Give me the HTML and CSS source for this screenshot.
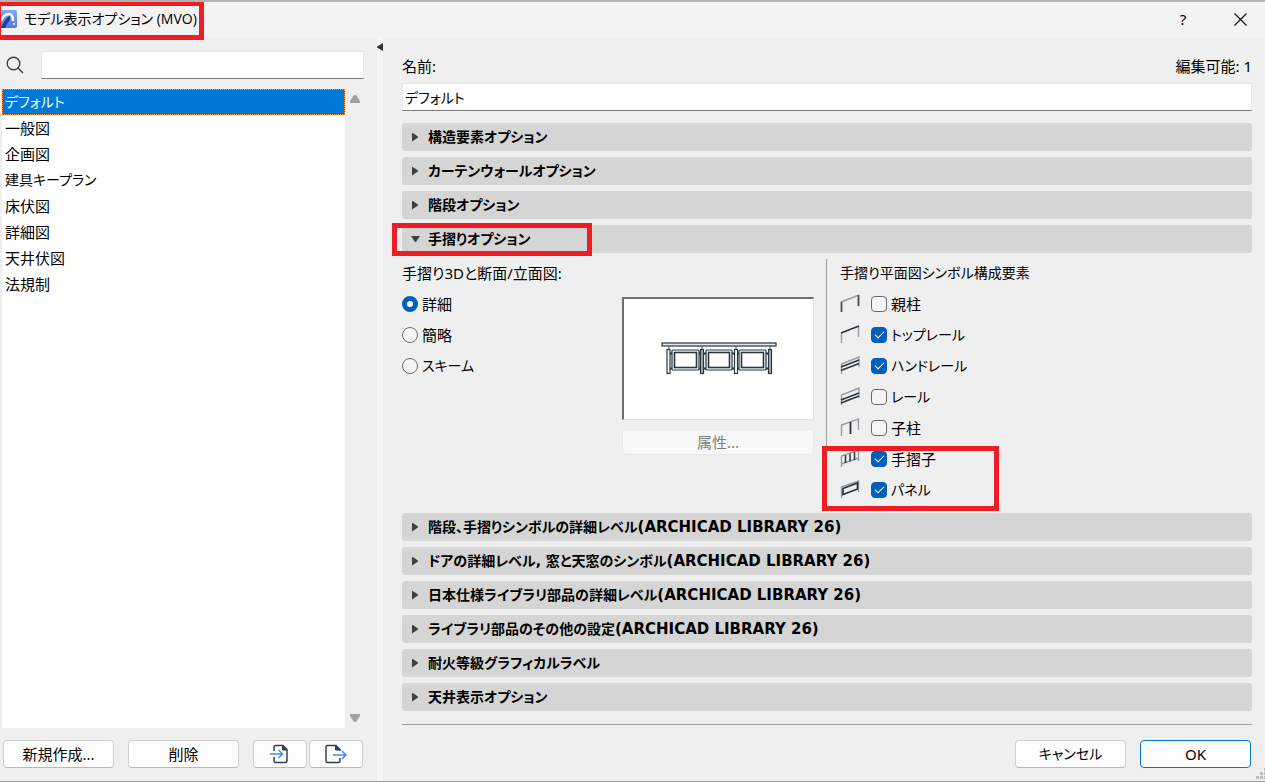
FILE: index.html
```html
<!DOCTYPE html>
<html lang="ja">
<head>
    <meta charset="UTF-8">
    <meta name="viewport" content="width=device-width, initial-scale=1.0">
    <title>モデル表示オプション (MVO)</title>
    <link rel="stylesheet" href="styles.css">
</head>
<body>
    <header class="titlebar">
        <svg class="logo" width="18" height="20" viewBox="0 0 18 20">
            <defs>
                <linearGradient id="logobg" x1="0" y1="0" x2="0" y2="1">
                    <stop offset="0" stop-color="#86a9ee"/>
                    <stop offset="1" stop-color="#4a78dc"/>
                </linearGradient>
            </defs>
            <path d="M0 1h15q2 0 2 2v14q0 2-2 2H0z" fill="url(#logobg)"/>
            <path d="M1 19C4 13 6 8 10 7v4C8 13 6 16 5 19z" fill="#1f4192"/>
            <path d="M0 13C3 8 5 5 9 5c3 0 4 3 4 7" fill="none" stroke="#fff" stroke-width="2.4"/>
            <circle cx="14" cy="15" r="1.1" fill="#fff"/>
        </svg>
        <h1>モデル表示オプション (MVO)</h1>
        <button type="button" class="winbtn" aria-label="ヘルプ">?</button>
        <button type="button" class="winbtn" aria-label="閉じる">
            <svg width="13" height="13" viewBox="0 0 13 13"><path d="M.5.5l12 12M12.5.5l-12 12" stroke="#1a1a1a" stroke-width="1.3"/></svg>
        </button>
        <span class="mark mark-title"></span>
    </header>

    <div class="dialog">
        <aside class="side">
            <div class="search">
                <label for="search">
                    <svg width="18" height="18" viewBox="0 0 18 18" fill="none" stroke="#33414b" stroke-width="1.4"><circle cx="7.5" cy="7.5" r="6.3"/><path d="M12 12l5 5"/></svg>
                </label>
                <input type="text" id="search" aria-label="検索">
            </div>
            <div class="listwrap">
                <ul class="list">
                    <li><button type="button" class="kana selected">デフォルト</button></li>
                    <li><button type="button">一般図</button></li>
                    <li><button type="button">企画図</button></li>
                    <li><button type="button" class="kana">建具キープラン</button></li>
                    <li><button type="button">床伏図</button></li>
                    <li><button type="button">詳細図</button></li>
                    <li><button type="button">天井伏図</button></li>
                    <li><button type="button">法規制</button></li>
                </ul>
                <div class="scroll">
                    <svg width="10" height="8" viewBox="0 0 10 8"><path d="M4 0h2l4 6v2H0V6z" fill="#a0a0a0"/></svg>
                    <svg width="10" height="8" viewBox="0 0 10 8"><path d="M0 0h10v2L6 8H4L0 2z" fill="#a0a0a0"/></svg>
                </div>
            </div>
            <div class="sidebtns">
                <button type="button" class="btn">新規作成...</button>
                <button type="button" class="btn">削除</button>
                <div class="pair">
                    <button type="button" class="btn small" aria-label="読み込み">
                        <svg width="20" height="20" viewBox="0 0 20 20" fill="none" stroke-width="1.5">
                            <path d="M4 7V3q0-1.5 1.5-1.5H13l4 4V17q0 1.5-1.5 1.5h-10Q4 18.5 4 17v-4" stroke="#33414b"/>
                            <path d="M12.5 1.5V6H17z" fill="#33414b" stroke="#33414b" stroke-width="1"/>
                            <path d="M0 10h12M8.5 6l4 4-4 4" stroke="#3d8bfa"/>
                        </svg>
                    </button>
                    <button type="button" class="btn small" aria-label="書き出し">
                        <svg width="22" height="20" viewBox="0 0 22 20" fill="none" stroke-width="1.5">
                            <path d="M15 7V5.5l-4-4H2.5Q1 1.5 1 3v14q0 1.5 1.5 1.5h11Q15 18.5 15 17v-3" stroke="#33414b"/>
                            <path d="M10.5 1.5V6H15z" fill="#33414b" stroke="#33414b" stroke-width="1"/>
                            <path d="M8 11h13M17 7l4 4-4 4" stroke="#3d8bfa"/>
                        </svg>
                    </button>
                </div>
            </div>
        </aside>

        <div class="splitter">
            <svg width="6" height="8" viewBox="0 0 6 8"><path d="M6 0v8L0 4.5v-1z" fill="#333"/></svg>
        </div>

        <main class="main">
            <div class="namerow">
                <label for="name">名前:</label>
                <span>編集可能: 1</span>
            </div>
            <input type="text" id="name" class="name kana" value="デフォルト">

            <div class="sections">
                <button type="button" class="section">構造要素オプション</button>
                <button type="button" class="section">カーテンウォールオプション</button>
                <button type="button" class="section">階段オプション</button>
                <div class="opened">
                    <button type="button" class="section open" aria-expanded="true">手摺りオプション</button>
                    <span class="mark mark-section"></span>
                </div>
                <div class="railing">
                    <div class="detail">
                        <p>手摺り3Dと断面/立面図:</p>
                        <div class="cols">
                            <div class="options">
                                <label><input type="radio" name="level" checked>詳細</label>
                                <label><input type="radio" name="level">簡略</label>
                                <label class="kana"><input type="radio" name="level">スキーム</label>
                            </div>
                            <div class="preview">
                                <div class="picture">
                                    <svg width="116" height="34" viewBox="0 0 116 34" fill="none" stroke="#27363f">
                                        <path d="M8 4v4M41 4v4M75 4v4M109 4v4" stroke="#59656c"/>
                                        <path d="M8.5 11.5h101M8.5 26.5h101" stroke="#27363f" stroke-width="2"/>
                                        <g fill="#fff">
                                            <rect x="11" y="8" width="27" height="20" rx="1" stroke-width="1.2"/>
                                            <rect x="45" y="8" width="26" height="20" rx="1" stroke-width="1.2"/>
                                            <rect x="78" y="8" width="27" height="20" rx="1" stroke-width="1.2"/>
                                            <rect x="13.5" y="10.5" width="22" height="15" stroke-width="1.6"/>
                                            <rect x="47.5" y="10.5" width="21" height="15" stroke-width="1.6"/>
                                            <rect x="80.5" y="10.5" width="22" height="15" stroke-width="1.6"/>
                                        </g>
                                        <g fill="#aab0b3" stroke-width="1.2">
                                            <rect x="6" y="7.5" width="3" height="24" fill="#fff"/>
                                            <rect x="39.5" y="7.5" width="3" height="24"/>
                                            <rect x="73.5" y="7.5" width="3" height="24" fill="#fff"/>
                                            <rect x="107.5" y="7.5" width="3" height="24"/>
                                        </g>
                                        <rect x="1" y="1" width="114" height="3" fill="#e4e7e8" stroke-width="1.2"/>
                                    </svg>
                                </div>
                                <button type="button" class="btn" disabled>属性...</button>
                            </div>
                        </div>
                    </div>
                    <div class="parts">
                        <p class="kana">手摺り平面図シンボル構成要素</p>
                        <div class="options">
                            <div class="part">
                                <svg width="20" height="22" viewBox="0 0 20 22" fill="none"><path d="M1 9L19 2" stroke="#969c9f" stroke-width="1.4"/><path d="M1.5 9v10M18.5 2v11" stroke="#46525a" stroke-width="1.8"/></svg>
                                <label><input type="checkbox">親柱</label>
                            </div>
                            <div class="part">
                                <svg width="20" height="22" viewBox="0 0 20 22" fill="none"><path d="M1.5 9v10M18.5 2v11" stroke="#969c9f" stroke-width="1.4"/><path d="M1 9L19 2" stroke="#27363f" stroke-width="1.8"/></svg>
                                <label class="kana"><input type="checkbox" checked>トップレール</label>
                            </div>
                            <div class="part">
                                <svg width="20" height="22" viewBox="0 0 20 22" fill="none"><path d="M1.5 19V9L19 2v10" stroke="#969c9f" stroke-width="1.4"/><path d="M1 12l18-7M1 15.5l18-7" stroke="#27363f" stroke-width="1.6"/></svg>
                                <label class="kana"><input type="checkbox" checked>ハンドレール</label>
                            </div>
                            <div class="part">
                                <svg width="20" height="22" viewBox="0 0 20 22" fill="none"><path d="M1.5 19V9L19 2v10" stroke="#969c9f" stroke-width="1.4"/><path d="M1 14l18-7M1 17l18-7" stroke="#27363f" stroke-width="1.5"/></svg>
                                <label class="kana"><input type="checkbox">レール</label>
                            </div>
                            <div class="part">
                                <svg width="20" height="22" viewBox="0 0 20 22" fill="none"><path d="M1.5 19V8L18.5 2v11" stroke="#969c9f" stroke-width="1.4"/><path d="M10.5 5v12" stroke="#27363f" stroke-width="1.8"/></svg>
                                <label><input type="checkbox">子柱</label>
                            </div>
                            <div class="part">
                                <svg width="20" height="22" viewBox="0 0 20 22" fill="none"><path d="M1.5 19V8L18.5 2v11M1.5 16l17-6" stroke="#969c9f" stroke-width="1.4"/><path d="M5.5 7v8M10 5.5v8M14.5 4v8" stroke="#27363f" stroke-width="1.5"/></svg>
                                <label><input type="checkbox" checked>手摺子</label>
                            </div>
                            <div class="part">
                                <svg width="20" height="22" viewBox="0 0 20 22" fill="none"><path d="M1.5 19V8L18.5 2v11" stroke="#969c9f" stroke-width="1.4"/><path d="M3 9.5L17.5 4v6L3 15.5z" stroke="#27363f" stroke-width="1.7"/></svg>
                                <label class="kana"><input type="checkbox" checked>パネル</label>
                            </div>
                        </div>
                        <span class="mark mark-parts"></span>
                    </div>
                </div>
                <button type="button" class="section"><span>階段、手摺りシンボルの詳細レベル<span class="lib">(ARCHICAD LIBRARY 26)</span></span></button>
                <button type="button" class="section"><span>ドアの詳細レベル, 窓と天窓のシンボル<span class="lib">(ARCHICAD LIBRARY 26)</span></span></button>
                <button type="button" class="section"><span>日本仕様ライブラリ部品の詳細レベル<span class="lib">(ARCHICAD LIBRARY 26)</span></span></button>
                <button type="button" class="section"><span>ライブラリ部品のその他の設定<span class="lib">(ARCHICAD LIBRARY 26)</span></span></button>
                <button type="button" class="section">耐火等級グラフィカルラベル</button>
                <button type="button" class="section">天井表示オプション</button>
            </div>

            <footer class="footer">
                <button type="button" class="btn kana">キャンセル</button>
                <button type="button" class="btn primary">OK</button>
            </footer>
        </main>
    </div>
    <svg class="grip" width="9" height="12" viewBox="0 0 9 12" fill="#bdbdbd"><path d="M8 0h3v3H8zM4 4h3v3H4zM8 4h3v3H8zM0 8h3v3H0zM4 8h3v3H4zM8 8h3v3H8z"/></svg>
</body>
</html>
```

FILE: styles.css
```css
*{margin:0;padding:0;box-sizing:border-box;}
body{position:relative;display:flex;flex-direction:column;min-height:100vh;background:#efefef;color:#000;border-top:2px solid #b4b4b4;border-bottom:1px solid #9a9a9a;font-family:"Noto Sans","Noto Sans CJK JP",sans-serif;font-size:15px;line-height:20px;font-feature-settings:"palt";}
button,input{font:inherit;color:inherit;font-feature-settings:inherit;}
button{cursor:pointer;}
svg{display:block;flex:none;}

.titlebar{position:relative;display:flex;align-items:center;height:36px;padding-bottom:2px;background:#f3f3f3;}
.titlebar h1{flex:1;margin-left:6px;font-family:"Open Sans","Noto Sans CJK JP",sans-serif;font-size:14px;font-weight:400;}
.winbtn{display:flex;align-items:center;justify-content:center;width:64px;height:34px;border:none;background:none;}
.winbtn:last-of-type{width:50px;}

/* red call-out frames */
.mark{position:absolute;border:5px solid #ee1c25;pointer-events:none;}
.mark-title{left:-4px;top:-1px;width:208px;height:39px;}
.mark-section{left:-10px;top:-2px;width:200px;height:33px;}
.mark-parts{left:-4px;bottom:-4px;width:177px;height:65px;}

.dialog{flex:1;display:flex;}
.side{display:flex;flex-direction:column;gap:10px;width:377px;padding:13px 13px 11px 2px;}
.search{display:flex;align-items:center;gap:17px;padding-left:4px;}
.search input,.name{min-width:0;height:28px;background:#fff;border:1px solid #e6e6e6;border-bottom-color:#7a7a7a;outline:none;}
.search input{flex:1;padding:0 4px;}
.listwrap{flex:1;display:flex;}
.list{flex:1;background:#fff;list-style:none;}
.list button{display:block;width:100%;height:26px;padding:0 2px;border:1px solid transparent;background:none;text-align:left;}
.list .selected{background:#0078d7;color:#fff;border:1px dotted #ff8728;}
.scroll{display:flex;flex-direction:column;justify-content:space-between;align-items:center;width:19px;padding:6px 0;}
.sidebtns{display:flex;gap:14px;padding:2px 1px;}
.pair{display:flex;gap:2px;}

.btn{display:flex;align-items:center;justify-content:center;width:111px;height:28px;border:1px solid #d0d0d0;border-bottom-color:#b8b8b8;border-radius:4px;background:#fdfdfd;}
.btn.small{width:54px;}
.btn.primary{border-color:#0078d4;}
.btn:disabled{width:100%;height:26px;border-color:#e8e8e8;background:#f8f8f8;color:#808080;cursor:default;}
.kana{font-size:14px;}

.splitter{width:6px;padding-top:5px;background:#f7f7f7;}

.main{flex:1;display:flex;flex-direction:column;padding:18px 13px 13px 19px;}
.namerow{display:flex;justify-content:space-between;margin-bottom:7px;}
.name{width:100%;padding:0 2px;}
.sections{flex:1;display:flex;flex-direction:column;gap:6px;margin-top:12px;}
.section{display:flex;align-items:center;gap:10px;width:100%;height:28px;padding-left:10px;border:none;border-radius:3px;background:#d5d5d5;font-family:"DejaVu Sans","Noto Sans CJK JP",sans-serif;font-size:14px;font-weight:700;text-align:left;}
.section::before{content:"";width:6px;height:9px;background:#404040;clip-path:polygon(0 0,100% 45%,100% 55%,0 100%);}
.section.open{gap:8px;padding-left:9px;}
.section.open::before{width:9px;height:6px;clip-path:polygon(0 0,100% 0,55% 100%,45% 100%);}
.lib{font-size:15px;}
.opened{position:relative;}

.railing{display:flex;height:248px;}
.detail{flex:none;width:424px;padding-right:12px;}
.detail p,.parts p{margin-top:4px;margin-bottom:5px;}
.cols{display:flex;justify-content:space-between;}
.options{display:flex;flex-direction:column;}
.options label{display:flex;align-items:center;gap:4px;height:31px;}
.preview{display:flex;flex-direction:column;gap:9px;width:192px;margin-top:9px;}
.picture{display:flex;align-items:center;justify-content:center;height:123px;background:#fff;border:2px solid #707070;border-right:1px solid #e0e0e0;border-bottom:1px solid #e0e0e0;}
.parts{position:relative;flex:1;padding-left:14px;}
.parts::before{content:"";position:absolute;left:0;top:0;width:1px;height:188px;background:#a0a0a0;}
.part{display:flex;align-items:center;gap:11px;height:31px;}

input[type="radio"],input[type="checkbox"]{appearance:none;display:flex;align-items:center;justify-content:center;width:16px;height:16px;border:1px solid #6a6a6a;background:#f5f5f5;}
input[type="radio"]{border-radius:50%;}
input[type="checkbox"]{border-radius:4px;}
input[type="radio"]:checked{border:5px solid #005fb8;background:#fff;}
input[type="checkbox"]:checked{border-color:#005fb8;background:#005fb8;}
input[type="checkbox"]:checked::before{content:"";width:8px;height:4px;border-left:1px solid #fff;border-bottom:1px solid #fff;transform:translateY(-1px) rotate(-45deg);}

.footer{display:flex;justify-content:flex-end;gap:14px;padding:15px 1px 0 0;margin-top:13px;border-top:1px solid #a0a0a0;}
.grip{position:absolute;right:0;bottom:1px;}
```
